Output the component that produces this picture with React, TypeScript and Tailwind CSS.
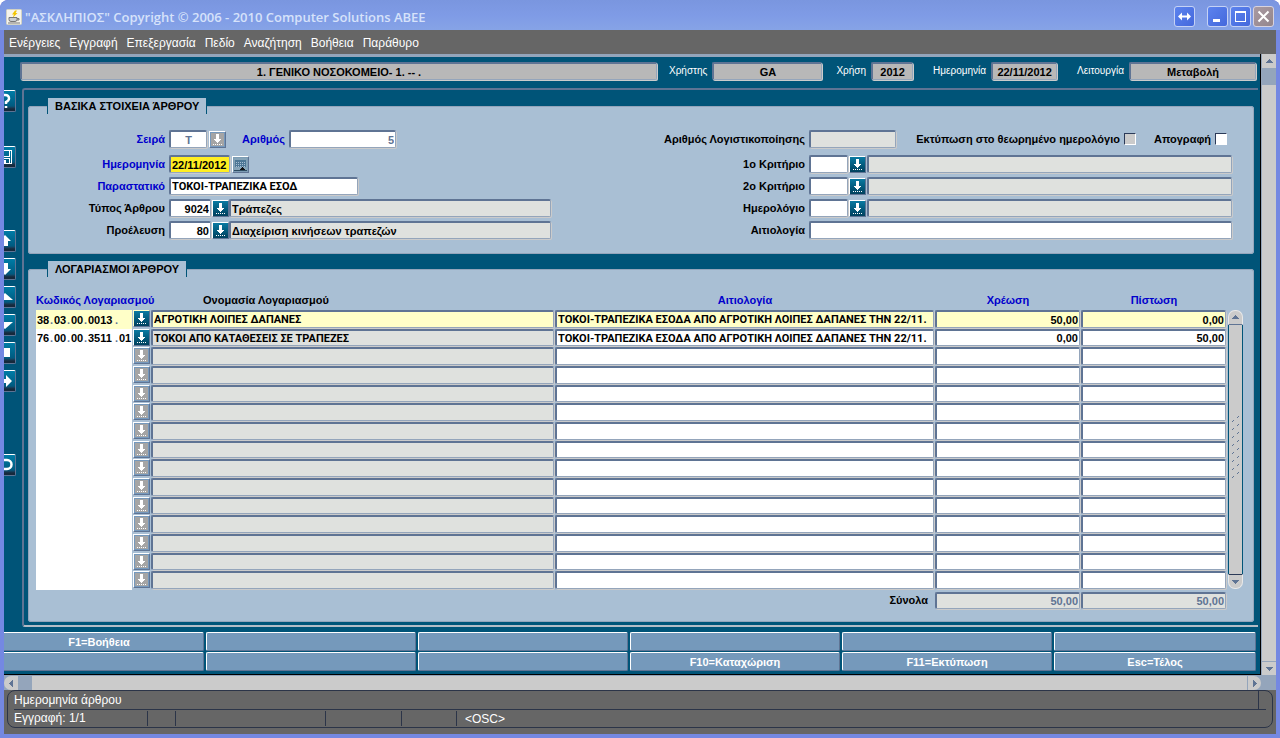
import React, { useState } from "react";
import clsx from "clsx";

const menuItems = [
  "Ενέργειες",
  "Εγγραφή",
  "Επεξεργασία",
  "Πεδίο",
  "Αναζήτηση",
  "Βοήθεια",
  "Παράθυρο",
];

const functionKeys = [
  "F1=Βοήθεια", "", "", "", "", "",
  "", "", "", "F10=Καταχώριση", "F11=Εκτύπωση", "Esc=Τέλος",
];

// null leaves an empty slot in the toolbar
const toolbar: (string | null)[] = [
  "help", null, "save", null, null, "up", "down", "first", "last",
  "block", "next", null, null, "undo",
];

const reason = "ΤΟΚΟΙ-ΤΡΑΠΕΖΙΚΑ ΕΣΟΔΑ ΑΠΟ ΑΓΡΟΤΙΚΗ ΛΟΙΠΕΣ ΔΑΠΑΝΕΣ ΤΗΝ 22/11.";

const entries = [
  {
    code: ["38", "03", "00", "0013", ""],
    name: "ΑΓΡΟΤΙΚΗ ΛΟΙΠΕΣ ΔΑΠΑΝΕΣ",
    reason,
    debit: "50,00",
    credit: "0,00",
  },
  {
    code: ["76", "00", "00", "3511", "01"],
    name: "ΤΟΚΟΙ ΑΠΟ ΚΑΤΑΘΕΣΕΙΣ ΣΕ ΤΡΑΠΕΖΕΣ",
    reason,
    debit: "0,00",
    credit: "50,00",
  },
];

const rows = Array.from({ length: 15 }, (_, i) => entries[i] ?? null);

const fieldClass =
  "block min-w-0 rounded-[2px] border-t-2 border-l-2 border-r border-b border-t-[#5f7494] border-l-[#5f7494] border-r-[#94a5bb] border-b-[#94a5bb] px-px shadow-[1px_1px_0_#cbcbcb] outline-none";

function Field({
  className,
  ...props
}: React.InputHTMLAttributes<HTMLInputElement>) {
  return <input className={clsx(fieldClass, className)} {...props} />;
}

function LovButton({
  label,
  disabled,
  current,
}: {
  label: string;
  disabled?: boolean;
  current?: boolean;
}) {
  return (
    <button
      type="button"
      aria-label={label}
      disabled={disabled}
      className={clsx(
        "flex h-[17px] w-[17px] shrink-0 items-center justify-center border border-r-[#5f7494] border-b-[#5f7494]",
        current ? "border-t-[#ffffcc] border-l-[#ffffcc]" : "border-t-white border-l-white",
        disabled
          ? "bg-[#7599bd]"
          : "bg-linear-to-b from-[#0a7aa2] to-[#00415e]",
      )}
    >
      <svg width="13" height="13" viewBox="0 0 13 13" shapeRendering="crispEdges">
        {disabled && <rect width="13" height="13" fill="#a5a5a5" />}
        <path d="M5 1h3v5h2v1H9v1H8v1H7v1H6V9H5V8H4V7H3V6h2z" fill="#fff" />
        <path d="M2 11.5h10" stroke="#fff" strokeDasharray="1 1" />
      </svg>
    </button>
  );
}

function ToolIcon({ name }: { name: string }) {
  return (
    <svg width="20" height="20" viewBox="0 0 20 20" fill="#fff">
      {name === "help" && (
        <path
          d="M6 7.500Q6 4 10 4T14 7.500Q14 9.500 11 11V13M11 15v2"
          fill="none"
          stroke="#fff"
          strokeWidth="2.500"
        />
      )}
      {name === "save" && (
        <path
          shapeRendering="crispEdges"
          fillRule="evenodd"
          d="M3 3h14v14H3zM4 4v12h2v-5h9v5h1V4h-1v6H6V4zM7 4v5h7V4zM8 12v4h1v-3h2v3h3v-4z"
        />
      )}
      {name === "up" && <path d="M10 4l6 6h-3v5H7v-5H4z" />}
      {name === "down" && <path d="M10 16l6-6h-3V4H7v6H4z" />}
      {name === "first" && <path d="M10 6l8 7H2z" />}
      {name === "last" && <path d="M10 14l8-7H2z" />}
      {name === "block" && <path d="M7 5h8v9H7z" />}
      {name === "next" && <path d="M17 10l-6-6v4H5v4h6v4z" />}
      {name === "undo" && (
        <path
          d="M5 5h7a4.500 4.500 0 0 1 0 9H6"
          fill="none"
          stroke="#fff"
          strokeWidth="2.500"
        />
      )}
    </svg>
  );
}

function Arrow({ dir }: { dir: "up" | "down" | "left" | "right" }) {
  const paths = {
    up: "M1 6h7L4.500 2z",
    down: "M1 3h7L4.500 7z",
    left: "M6 1v7L2 4.500z",
    right: "M3 1v7l4-3.500z",
  };
  return (
    <svg width="9" height="9" viewBox="0 0 9 9" shapeRendering="crispEdges">
      <path d={paths[dir]} fill="#5f7494" />
    </svg>
  );
}

function TitleBar() {
  const button =
    "flex h-[21px] w-[21px] items-center justify-center rounded-[3px] border border-[#c5d2f5] bg-linear-to-br from-[#5c83ee] to-[#4468dc]";
  return (
    <header className="flex h-[30px] items-center rounded-t-lg bg-linear-to-b from-[#7a96df] via-[#7f9be6] to-[#86a3e6] pr-1.5 pl-1.5 pt-[3px]">
      <svg width="16" height="16" viewBox="0 0 16 16" className="shrink-0">
        <rect x=".5" y=".5" width="15" height="15" rx="1" fill="#f6f4ec" stroke="#d2d2c4" />
        <path d="M9 1.500L6 5.500h2L6.500 9l5-5H9.500L11 1.500z" fill="#f2c500" />
        <path d="M3 8.500h8v2q0 2-2 2H5q-2 0-2-2zM11 9.500h2v1.500h-2" fill="#c9cdd2" stroke="#777" />
        <path d="M2 14h12" stroke="#777" />
      </svg>
      <h1 className="ml-[3px] font-['Open_Sans','Noto_Sans',sans-serif] text-[13px] font-semibold whitespace-nowrap text-[#d6e2fa]">
        &quot;ΑΣΚΛΗΠΙΟΣ&quot; Copyright © 2006 - 2010 Computer Solutions ABEE
      </h1>
      <div className="ml-auto flex items-center gap-[2px]">
        <button type="button" aria-label="Μετακίνηση" className={clsx(button, "mr-2.5")}>
          <svg width="15" height="15" viewBox="0 0 15 15" fill="#fff">
            <path d="M1 7.500l4-4v3h5v-3l4 4-4 4v-3H5v3z" />
          </svg>
        </button>
        <button type="button" aria-label="Ελαχιστοποίηση" className={button}>
          <svg width="15" height="15" viewBox="0 0 15 15" fill="#fff">
            <path d="M3 10h7v3H3z" />
          </svg>
        </button>
        <button type="button" aria-label="Μεγιστοποίηση" className={button}>
          <svg width="15" height="15" viewBox="0 0 15 15" fill="#fff" shapeRendering="crispEdges">
            <path fillRule="evenodd" d="M2 2h11v11H2zM3 4v8h9V4z" />
          </svg>
        </button>
        <button
          type="button"
          aria-label="Κλείσιμο"
          className="flex h-[21px] w-[21px] items-center justify-center rounded-[3px] border border-[#d8d3de] bg-linear-to-br from-[#a99aa2] to-[#94868c]"
        >
          <svg width="15" height="15" viewBox="0 0 15 15">
            <path d="M2.500 2.500l10 10M12.500 2.500l-10 10" stroke="#fff" strokeWidth="2" />
          </svg>
        </button>
      </div>
    </header>
  );
}

function HeaderItem({
  id,
  label,
  value,
  className,
}: {
  id: string;
  label: string;
  value: string;
  className: string;
}) {
  return (
    <div className="flex items-center gap-[5px]">
      <label htmlFor={id} className="text-[10px] text-white">
        {label}
      </label>
      <Field
        id={id}
        readOnly
        value={value}
        className={clsx("h-[18px] bg-[#b8b8b8] text-center", className)}
      />
    </div>
  );
}

function Label({
  htmlFor,
  required,
  className,
  children,
}: {
  htmlFor: string;
  required?: boolean;
  className?: string;
  children: React.ReactNode;
}) {
  return (
    <label
      htmlFor={htmlFor}
      className={clsx(
        "shrink-0 text-right whitespace-nowrap",
        required && "text-[#0000cc]",
        className,
      )}
    >
      {children}
    </label>
  );
}

function Row({ children }: { children: React.ReactNode }) {
  return <div className="flex h-[18px] items-center">{children}</div>;
}

function Checkbox({ id, disabled }: { id: string; disabled?: boolean }) {
  return (
    <input
      id={id}
      type="checkbox"
      disabled={disabled}
      className="h-3 w-3 shrink-0 appearance-none border border-t-[#2b3a58] border-r-white border-b-white border-l-[#2b3a58] bg-white checked:bg-[#005478] disabled:bg-[#cbcbcb]"
    />
  );
}

function Panel({ title, className, children }: { title: string; className?: string; children: React.ReactNode }) {
  return (
    <fieldset
      className={clsx("min-w-0 rounded-[3px] border border-[#94a5bb] bg-[#a9bfd4] pl-[7px]", className)}
    >
      <legend className="ml-[11px] h-4 border-x border-[#005478] bg-[#a9bfd4] px-[7px] leading-4">
        {title}
      </legend>
      {children}
    </fieldset>
  );
}

function BasicData() {
  const [document, setDocument] = useState("ΤΟΚΟΙ-ΤΡΑΠΕΖΙΚΑ ΕΣΟΔ");
  const [date, setDate] = useState("22/11/2012");

  return (
    <Panel title="ΒΑΣΙΚΑ ΣΤΟΙΧΕΙΑ ΆΡΘΡΟΥ" className="pt-4 pr-[21px] pb-[14px]">
      <div className="flex justify-between gap-10">
        <div className="flex w-[515px] flex-col gap-1">
          <div className="mb-[3px]">
            <Row>
              <Label htmlFor="series" required className="mr-1 w-[129px]">Σειρά</Label>
              <Field id="series" disabled value="T" className="mr-0.5 h-[18px] w-[38px] bg-white text-center text-[#5f7494]" />
              <LovButton label="Λίστα σειρών" disabled />
              <Label htmlFor="number" required className="mr-1 w-[59px]">Αριθμός</Label>
              <Field id="number" disabled value="5" className="h-[18px] w-[107px] bg-white text-right text-[#5f7494]" />
            </Row>
          </div>
          <Row>
            <Label htmlFor="date" required className="mr-1 w-[129px]">Ημερομηνία</Label>
            <Field
              id="date"
              value={date}
              onChange={(e) => setDate(e.target.value)}
              className="mr-0.5 h-[18px] w-[61px] bg-[#ffee22]"
            />
            <button
              type="button"
              aria-label="Ημερολόγιο"
              className="flex h-[17px] w-[17px] items-center justify-center border border-t-white border-r-[#5f7494] border-b-[#5f7494] border-l-white bg-[#7c9cb4]"
            >
              <svg width="13" height="13" viewBox="0 0 13 13" shapeRendering="crispEdges">
                <rect width="13" height="13" fill="#86a4b8" />
                <path d="M1 2h11v7H1z" fill="#4d7795" />
                <path d="M2 4h9M2 6h9M2 8h9" stroke="#a9bfd4" strokeDasharray="1 1" />
                <path d="M5 12l3-3 4 3z" fill="#111" />
                <path d="M0 12h13" stroke="#2d4a60" />
              </svg>
            </button>
          </Row>
          <Row>
            <Label htmlFor="document" required className="mr-1 w-[129px]">Παραστατικό</Label>
            <Field
              id="document"
              value={document}
              onChange={(e) => setDocument(e.target.value)}
              className="h-[18px] w-[189px] bg-white font-['Roboto',Arial,sans-serif]"
            />
          </Row>
          <Row>
            <Label htmlFor="type" className="mr-1 w-[129px]">Τύπος Άρθρου</Label>
            <Field id="type" defaultValue="9024" className="mr-px h-[18px] w-[42px] bg-white text-right" />
            <LovButton label="Λίστα τύπων" />
            <Field aria-label="Περιγραφή τύπου" readOnly value="Τράπεζες" className="h-[18px] flex-1 bg-[#dfe1de]" />
          </Row>
          <Row>
            <Label htmlFor="origin" className="mr-1 w-[129px]">Προέλευση</Label>
            <Field id="origin" defaultValue="80" className="mr-px h-[18px] w-[42px] bg-white text-right" />
            <LovButton label="Λίστα προελεύσεων" />
            <Field aria-label="Περιγραφή προέλευσης" readOnly value="Διαχείριση κινήσεων τραπεζών" className="h-[18px] flex-1 bg-[#dfe1de]" />
          </Row>
        </div>

        <div className="flex max-w-[640px] flex-1 flex-col gap-1">
          <div className="mb-[3px]">
            <Row>
              <Label htmlFor="posting" className="mr-1 w-[213px]">Αριθμός Λογιστικοποίησης</Label>
              <Field id="posting" readOnly className="h-[18px] w-[87px] bg-[#dfe1de]" />
              <Label htmlFor="print" className="mr-1 ml-auto">Εκτύπωση στο θεωρημένο ημερολόγιο</Label>
              <Checkbox id="print" disabled />
              <Label htmlFor="inventory" className="mr-1 ml-[18px]">Απογραφή</Label>
              <span className="mr-[5px] flex">
                <Checkbox id="inventory" />
              </span>
            </Row>
          </div>
          {["1ο Κριτήριο", "2ο Κριτήριο", "Ημερολόγιο"].map((label, i) => (
            <Row key={label}>
              <Label htmlFor={`criterion-${i}`} className="mr-1 w-[213px]">{label}</Label>
              <Field id={`criterion-${i}`} className="mr-px h-[18px] w-[39px] bg-white" />
              <LovButton label={`Λίστα ${label}`} />
              <Field aria-label={`Περιγραφή ${label}`} readOnly className="ml-px h-[18px] flex-1 bg-[#dfe1de]" />
            </Row>
          ))}
          <Row>
            <Label htmlFor="reason" className="mr-1 w-[213px]">Αιτιολογία</Label>
            <Field id="reason" className="h-[18px] flex-1 bg-white" />
          </Row>
        </div>
      </div>
    </Panel>
  );
}

function AccountCode({ code, row }: { code: string[]; row: number }) {
  return (
    <div className="flex h-full items-center pl-px">
      {code.map((part, i) => (
        <React.Fragment key={i}>
          {i > 0 && <span className="w-1 text-[#5f7494]">.</span>}
          <input
            aria-label={`Κωδικός ${row + 1}.${i + 1}`}
            defaultValue={part}
            className={clsx("h-full min-w-0 bg-transparent outline-none", i === 3 ? "w-[27px]" : "w-[13px]")}
          />
        </React.Fragment>
      ))}
    </div>
  );
}

function Accounts() {
  return (
    <Panel title="ΛΟΓΑΡΙΑΣΜΟΙ ΆΡΘΡΟΥ" className="mt-[7px] pr-[10px] pb-3">
      <div className="flex">
        <div className="min-w-0 flex-1">
          <table className="w-full table-fixed">
            <colgroup>
              <col className="w-[97px]" />
              <col className="w-[18px]" />
              <col />
              <col className="w-[380px]" />
              <col className="w-[146px]" />
              <col className="w-[146px]" />
            </colgroup>
            <thead>
              <tr className="h-[33px] align-bottom whitespace-nowrap text-[#0000cc]">
                <th colSpan={2} className="pb-[3px] text-left">Κωδικός Λογαριασμού</th>
                <th className="pb-[3px] pl-[52px] text-left text-black">Ονομασία Λογαριασμού</th>
                <th className="pb-[3px]">Αιτιολογία</th>
                <th className="pb-[3px]">Χρέωση</th>
                <th className="pb-[3px]">Πίστωση</th>
              </tr>
            </thead>
            <tbody>
              {rows.map((entry, i) => {
                const height = i % 3 === 1 ? "h-[17px]" : "h-[18px]";
                const bg = i === 0 ? "bg-[#ffffc8]" : "bg-white";
                return (
                  <tr key={i} className={i % 3 === 1 ? "h-[18px]" : "h-[19px]"}>
                    <td className="p-0 pr-px">
                      <div className={clsx(i % 3 === 1 ? "h-[18px]" : "h-[19px]", bg)}>
                        {entry && <AccountCode code={entry.code} row={i} />}
                      </div>
                    </td>
                    <td className="p-0 align-top">
                      <LovButton label={`Λίστα λογαριασμών ${i + 1}`} disabled={!entry} current={i === 0} />
                    </td>
                    <td className="p-0 pr-px align-top">
                      <Field
                        aria-label={`Ονομασία ${i + 1}`}
                        readOnly
                        value={entry?.name ?? ""}
                        className={clsx("w-full font-['Roboto',Arial,sans-serif]", height, i === 0 ? bg : "bg-[#dfe1de]")}
                      />
                    </td>
                    <td className="p-0 pr-px align-top">
                      <Field
                        aria-label={`Αιτιολογία ${i + 1}`}
                        defaultValue={entry?.reason}
                        className={clsx("w-full font-['Roboto',Arial,sans-serif]", height, bg)}
                      />
                    </td>
                    <td className="p-0 pr-px align-top">
                      <Field
                        aria-label={`Χρέωση ${i + 1}`}
                        defaultValue={entry?.debit}
                        className={clsx("w-full text-right", height, bg)}
                      />
                    </td>
                    <td className="p-0 pr-px align-top">
                      <Field
                        aria-label={`Πίστωση ${i + 1}`}
                        defaultValue={entry?.credit}
                        className={clsx("w-full text-right", height, bg)}
                      />
                    </td>
                  </tr>
                );
              })}
            </tbody>
            <tfoot>
              <tr>
                <th colSpan={4} className="pt-px pr-[7px] text-right">Σύνολα</th>
                <td className="pt-0.5 pr-px">
                  <Field aria-label="Σύνολο χρέωσης" readOnly value="50,00" className="h-[17px] w-full bg-[#dfe1de] text-right text-[#5f7494]" />
                </td>
                <td className="pt-0.5 pr-px">
                  <Field aria-label="Σύνολο πίστωσης" readOnly value="50,00" className="h-[17px] w-full bg-[#dfe1de] text-right text-[#5f7494]" />
                </td>
              </tr>
            </tfoot>
          </table>
        </div>

        <div className="mt-[33px] mb-5 ml-px flex w-[15px] flex-col">
          <button type="button" aria-label="Πάνω" className="flex h-[15px] items-center justify-center rounded-t-[7px] border border-b-[#5f7494] border-[#e8e8e8] bg-[#cbcbcb]">
            <Arrow dir="up" />
          </button>
          <div className="flex flex-1 items-center justify-center border-x border-[#005478] bg-[#cbcbcb]">
            <svg width="9" height="70" viewBox="0 0 9 70" stroke="#5f7494">
              {Array.from({ length: 8 }, (_, i) => (
                <path key={i} d={`M1 ${i * 8 + 7}l2-2M6 ${i * 8 + 3}l2-2`} />
              ))}
            </svg>
          </div>
          <button type="button" aria-label="Κάτω" className="flex h-[15px] items-center justify-center rounded-b-[7px] border border-t-[#2b3a58] border-[#e8e8e8] bg-[#cbcbcb]">
            <Arrow dir="down" />
          </button>
        </div>
      </div>
    </Panel>
  );
}

function StatusBar() {
  return (
    <footer className="h-11 bg-[#666666] px-[3px] text-xs text-white">
      <div className="flex h-[38px] flex-col rounded-lg border border-[#2b3448] px-1.5">
        <div className="flex h-[19px] items-center border-b border-[#2b3448]">
          <span className="flex-1">Ημερομηνία άρθρου</span>
          <span className="mr-[7px] h-full w-px bg-[#2b3448]" />
        </div>
        <div className="flex h-[17px] items-center">
          <span className="w-[134px] border-r border-[#2b3448] leading-[15px]">Εγγραφή: 1/1</span>
          <span className="h-[15px] w-7 border-r border-[#2b3448]" />
          <span className="h-[15px] w-[150px] border-r border-[#2b3448]" />
          <span className="h-[15px] w-[76px] border-r border-[#2b3448]" />
          <span className="h-[15px] w-[55px] border-r border-[#2b3448]" />
          <span className="pl-2">&lt;OSC&gt;</span>
        </div>
      </div>
    </footer>
  );
}

export default function App() {
  return (
    <div className="flex min-h-screen flex-col overflow-hidden rounded-t-lg bg-linear-to-b from-[#5f6ad8] to-[#5a5fcf] font-['Liberation_Sans',Arial,sans-serif] text-[11px] leading-[14px]">
      <TitleBar />
      <div className="flex flex-1 flex-col border-x-4 border-b-4 border-[#7488e2]">
        <nav className="flex h-6 items-center gap-[9px] bg-[#666666] pt-px pl-[5px] text-xs text-white">
          {menuItems.map((item) => (
            <button key={item} type="button">
              {item}
            </button>
          ))}
        </nav>

        <div className="flex flex-1">
          <main className="min-w-0 flex-1 overflow-hidden border-r border-b border-black bg-[#005478] font-bold">
            <div className="h-[3px] bg-[#94a5bb]" />
            <div className="flex items-center justify-between pt-[5px] pr-1 pb-2 pl-4">
              <Field
                aria-label="Φορέας"
                readOnly
                value="1. ΓΕΝΙΚΟ ΝΟΣΟΚΟΜΕΙΟ- 1. -- ."
                className="mr-3 h-[18px] flex-1 bg-[#b8b8b8] text-center"
              />
              <div className="flex gap-[14px] font-normal">
                <HeaderItem id="user" label="Χρήστης" value="GA" className="w-[110px] font-bold" />
                <HeaderItem id="year" label="Χρήση" value="2012" className="mr-[6px] w-[42px] font-bold" />
                <HeaderItem id="today" label="Ημερομηνία" value="22/11/2012" className="mr-[6px] w-[66px] font-bold" />
                <HeaderItem id="mode" label="Λειτουργία" value="Μεταβολή" className="w-[127px] font-bold" />
              </div>
            </div>

            <div className="flex">
              <div className="flex w-3 flex-col items-end gap-1.5 overflow-hidden pt-0.5">
                {toolbar.map((name, i) =>
                  name ? (
                    <button
                      key={i}
                      type="button"
                      aria-label={name}
                      className="flex h-[22px] w-[22px] shrink-0 items-center justify-center rounded-[2px] border border-t-white border-r-[#5f7494] border-b-[#5f7494] border-l-white bg-linear-to-b from-[#007ca6] via-[#005a80] via-75% to-[#16293c] to-90%"
                    >
                      <ToolIcon name={name} />
                    </button>
                  ) : (
                    <span key={i} className="h-[22px] w-[22px] shrink-0" />
                  ),
                )}
              </div>
              <div className="mr-0.5 ml-1.5 min-w-0 flex-1 rounded-l-[3px] border-t-2 border-b-2 border-l-2 border-t-[#5f7494] border-b-[#b4bcc6] border-l-[#5f7494] pt-2 pr-1 pb-[3px] pl-1">
                <BasicData />
                <Accounts />
              </div>
            </div>

            <div className="mt-[5px] -ml-2.5 grid grid-cols-[210fr_210fr_210fr_210fr_210fr_202fr] gap-x-0.5 gap-y-px pr-1 pb-[3px]">
              {functionKeys.map((key, i) => (
                <button
                  key={i}
                  type="button"
                  aria-label={key || `Κενό πλήκτρο ${i + 1}`}
                  className="h-[19px] rounded-[2px] border border-t-white border-r-[#5f7494] border-b-[#5f7494] border-l-white bg-[#7599bb] text-white"
                >
                  {key}
                </button>
              ))}
            </div>
          </main>

          <div className="flex w-[15px] flex-col border-l border-[#94a5bb] bg-[#cbcbcb]">
            <button type="button" aria-label="Κύλιση πάνω" className="flex h-[14px] items-center justify-center rounded-t-[7px]">
              <Arrow dir="up" />
            </button>
            <div className="h-[17px] bg-[#94a5bb]" />
            <button type="button" aria-label="Κύλιση κάτω" className="mt-auto flex h-[14px] items-center justify-center rounded-b-[7px] border-t border-[#94a5bb]">
              <Arrow dir="down" />
            </button>
          </div>
        </div>

        <div className="flex h-[15px] border-t border-[#94a5bb] bg-[#94a5bb] pr-[15px]">
          <button type="button" aria-label="Κύλιση αριστερά" className="flex w-[14px] items-center justify-center rounded-l-[7px] bg-[#cbcbcb]">
            <Arrow dir="left" />
          </button>
          <div className="ml-[14px] flex-1 bg-[#cbcbcb]" />
          <button type="button" aria-label="Κύλιση δεξιά" className="flex w-[14px] items-center justify-center rounded-r-[7px] border-l border-[#94a5bb] bg-[#cbcbcb]">
            <Arrow dir="right" />
          </button>
        </div>
        <StatusBar />
      </div>
    </div>
  );
}
